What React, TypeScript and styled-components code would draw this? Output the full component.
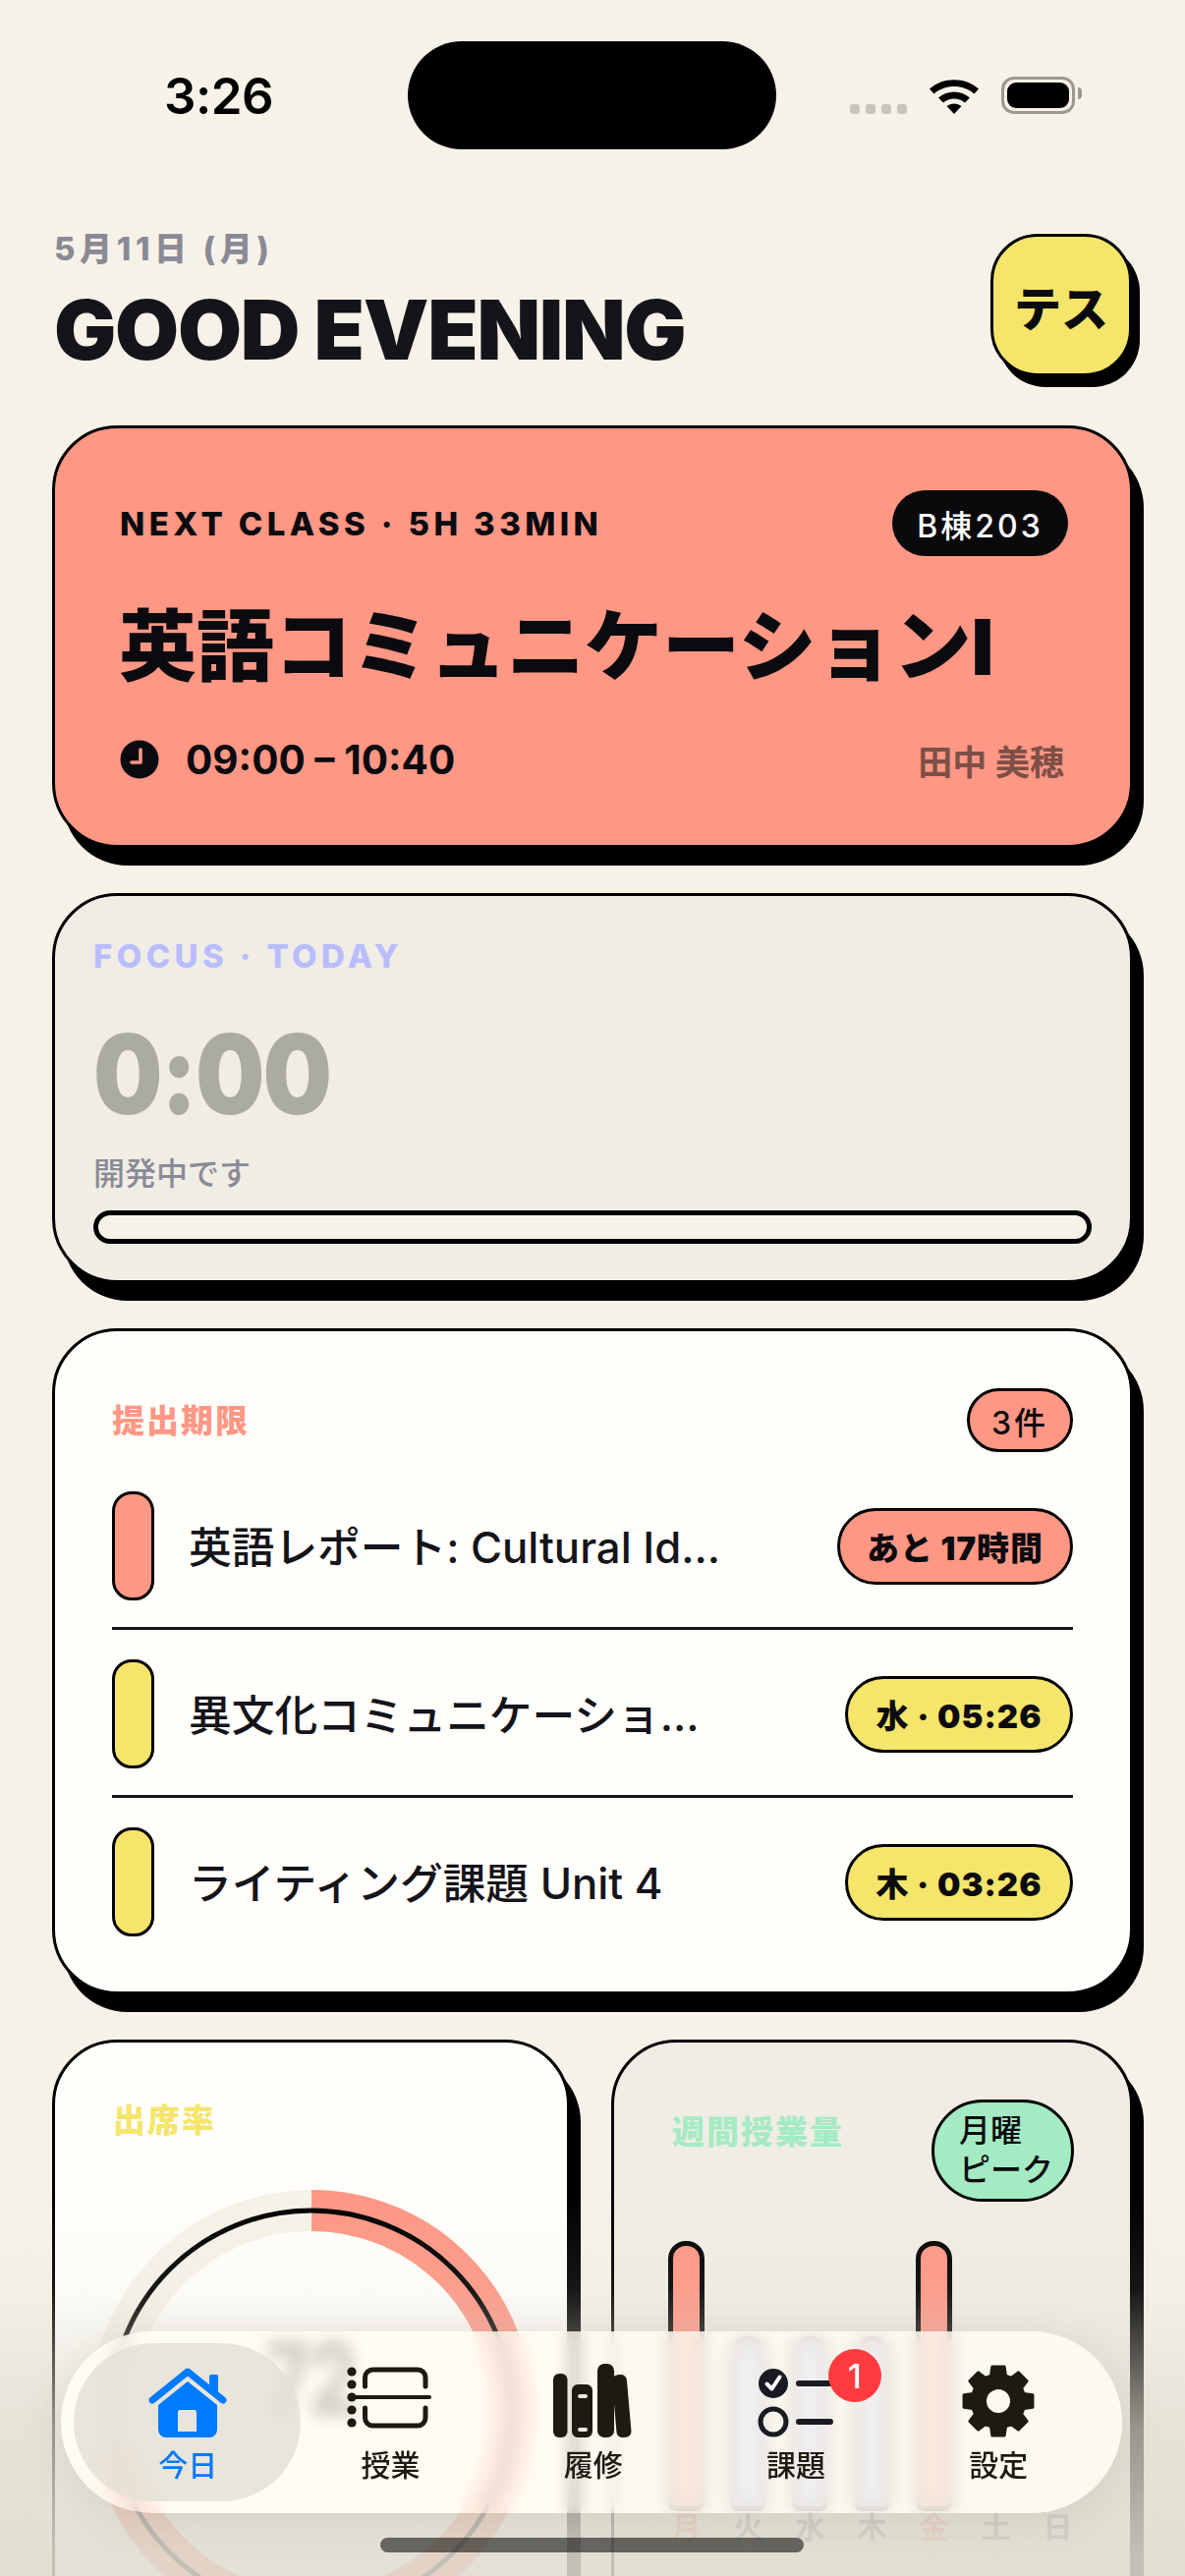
import React from "react";
import styled, { createGlobalStyle } from "styled-components";

const INK = "#0B0B0F";
const CORAL = "#FF9785";
const YELLOW = "#F5E56B";
const MINT = "#A4EBC3";
const LAVENDER = "#B9BCFF";
const CREAM = "#F6F2E8";
const PAPER = "#F0EDE4";
const WHITE = "#FFFEFA";
const MUTED = "#8A8A96";
const TAB_INK = "#1E1A10";
const FONT = `Inter, "Noto Sans CJK JP", sans-serif`;

const Global = createGlobalStyle`
  html, body { margin: 0; padding: 0; background: ${CREAM}; }
  #root { width: 1206px; height: 2622px; overflow: hidden; }
  * { box-sizing: border-box; }
`;

const Phone = styled.div`
  position: relative;
  width: 1206px;
  height: 2622px;
  overflow: hidden;
  background: ${CREAM};
  font-family: ${FONT};
  color: ${INK};
`;

const StatusBar = styled.div`
  display: flex;
  align-items: flex-start;
  height: 233px;
  padding-top: 42px;
`;
const Clock = styled.div`
  width: 415px;
  padding: 27px 0 0 167px;
  font-size: 51px;
  line-height: 58px;
  font-weight: 600;
  color: #000;
  letter-spacing: -0.5px;
`;
const Island = styled.div`
  width: 375px;
  height: 110px;
  border-radius: 55px;
  background: #000;
`;
const StatusIcons = styled.div`
  display: flex;
  align-items: flex-start;
  padding: 36px 0 0 75px;
`;
const Signal = styled.div`
  display: flex;
  gap: 6px;
  margin: 28px 22px 0 0;
`;
const SignalDot = styled.span`
  width: 10px;
  height: 10px;
  border-radius: 3px;
  background: #c8c4ba;
`;
const Battery = styled.div`
  position: relative;
  width: 75px;
  height: 38px;
  margin-left: 22px;
  padding: 3px;
  border: 3px solid #9c988e;
  border-radius: 13px;
  &::after {
    content: "";
    position: absolute;
    right: -10px;
    top: 8px;
    width: 4px;
    height: 12px;
    border-radius: 0 4px 4px 0;
    background: #9c988e;
  }
`;
const BatteryFill = styled.div`
  width: 100%;
  height: 100%;
  border-radius: 9px;
  background: #000;
`;

const Content = styled.main`
  padding: 0 53px;
  display: flex;
  flex-direction: column;
  gap: 46px;
`;

const Header = styled.header`
  display: flex;
  justify-content: space-between;
  align-items: flex-start;
  height: 154px;
  padding: 0 1px 0 2px;
`;
const DateLine = styled.div`
  font-size: 33px;
  line-height: 40px;
  font-weight: 800;
  letter-spacing: 4.6px;
  color: ${MUTED};
`;
const Greeting = styled.h1`
  margin: 13px 0 0;
  font-size: 84px;
  line-height: 100px;
  font-weight: 900;
  letter-spacing: -1.3px;
  color: #14141a;
`;
const AvatarButton = styled.div`
  display: flex;
  align-items: center;
  justify-content: center;
  width: 144px;
  height: 145px;
  margin-top: 5px;
  border: 3px solid #000;
  border-radius: 48px;
  background: ${YELLOW};
  box-shadow: 8px 11px 0 #000;
  font-size: 48px;
  font-weight: 800;
  color: ${INK};
`;

const Card = styled.section<{ $bg: string }>`
  border: 3px solid #000;
  border-radius: 66px;
  background: ${(p) => p.$bg};
  box-shadow: 11px 18px 0 #000;
`;

const Hero = styled(Card)`
  height: 430px;
  padding: 63px 63px 0 66px;
`;
const HeroTop = styled.div`
  display: flex;
  align-items: center;
  justify-content: space-between;
`;
const Eyebrow = styled.div<{ $color?: string }>`
  font-size: 33px;
  line-height: 40px;
  font-weight: 800;
  letter-spacing: 4.4px;
  color: ${(p) => p.$color ?? INK};
`;
const RoomPill = styled.div`
  display: flex;
  align-items: center;
  justify-content: center;
  width: 179px;
  height: 67px;
  border-radius: 34px;
  background: #0a0a0d;
  color: #fff;
  font-size: 32px;
  font-weight: 500;
  letter-spacing: 3px;
`;
const HeroTitle = styled.h2`
  margin: 42px 0 0 -1px;
  font-size: 79px;
  line-height: 100px;
  font-weight: 900;
  color: ${INK};
  white-space: nowrap;
`;
const HeroMeta = styled.div`
  display: flex;
  align-items: center;
  justify-content: space-between;
  height: 52px;
  margin-top: 39px;
`;
const TimeGroup = styled.div`
  display: flex;
  align-items: center;
  gap: 27px;
  font-size: 40.5px;
  font-weight: 700;
`;
const Teacher = styled.div`
  margin-right: 4px;
  font-size: 35px;
  font-weight: 600;
  color: #7d4f45;
`;

const Focus = styled(Card)`
  height: 397px;
  padding: 41px 39px 0;
`;
const FocusTime = styled.div`
  margin-top: 40px;
  font-size: 112px;
  line-height: 120px;
  font-weight: 900;
  letter-spacing: -2px;
  color: #ababa4;
  transform: scaleX(0.885);
  transform-origin: left center;
`;
const FocusNote = styled.div`
  margin-top: 20px;
  font-size: 32px;
  line-height: 44px;
  font-weight: 500;
  color: ${MUTED};
`;
const Track = styled.div`
  height: 34px;
  margin-top: 15px;
  border: 5px solid #000;
  border-radius: 17px;
  background: ${CREAM};
`;

const Deadlines = styled(Card)`
  padding: 58px 58px 56px;
`;
const SectionHead = styled.div`
  display: flex;
  align-items: center;
  justify-content: space-between;
  margin-bottom: 10px;
`;
const SectionTitle = styled.div<{ $color: string }>`
  font-size: 33px;
  line-height: 40px;
  font-weight: 900;
  letter-spacing: 2px;
  color: ${(p) => p.$color};
`;
const CountPill = styled.div`
  display: flex;
  align-items: center;
  justify-content: center;
  width: 108px;
  height: 65px;
  border: 3px solid #000;
  border-radius: 33px;
  background: ${CORAL};
  font-size: 32px;
  font-weight: 500;
  letter-spacing: 3px;
`;
const Row = styled.div`
  display: flex;
  align-items: center;
  padding: 30px 0 27px;
  border-bottom: 3px solid #14141a;
  &:last-child {
    padding-bottom: 0;
    border-bottom: none;
  }
`;
const Strip = styled.div<{ $color: string }>`
  flex: none;
  width: 43px;
  height: 111px;
  border: 3px solid #000;
  border-radius: 20px;
  background: ${(p) => p.$color};
`;
const RowTitle = styled.div`
  flex: 1;
  margin-left: 35px;
  padding-bottom: 4px;
  font-size: 43.7px;
  font-weight: 500;
  color: #14141a;
  white-space: nowrap;
`;
const DuePill = styled.div<{ $color: string; $width: number }>`
  display: flex;
  align-items: center;
  justify-content: center;
  flex: none;
  width: ${(p) => p.$width}px;
  height: 78px;
  border: 3px solid #000;
  border-radius: 39px;
  background: ${(p) => p.$color};
  font-size: 33px;
  font-weight: 900;
  letter-spacing: 1px;
`;

const Pair = styled.div`
  display: grid;
  grid-template-columns: 527px 531px;
  gap: 42px;
`;
const Tile = styled(Card)`
  height: 680px;
`;
const AttendanceTile = styled(Tile)`
  padding: 59px 0 0;
  display: flex;
  flex-direction: column;
  align-items: center;
`;
const AttendanceTitle = styled(SectionTitle)`
  align-self: flex-start;
  margin-left: 59px;
`;
const RingBox = styled.div`
  position: relative;
  width: 450px;
  height: 450px;
  margin-top: 51px;
`;
const RingValue = styled.div`
  position: absolute;
  left: 0;
  right: 0;
  top: 132px;
  text-align: center;
  font-size: 104px;
  line-height: 120px;
  font-weight: 900;
  color: ${INK};
  transform: scaleX(0.72);
`;
const WeeklyTile = styled(Tile)`
  padding: 58px 42px 0;
`;
const WeeklyHead = styled.div`
  display: flex;
  align-items: flex-start;
  justify-content: space-between;
`;
const WeeklyTitle = styled(SectionTitle)`
  margin: 13px 0 0 17px;
`;
const PeakPill = styled.div`
  width: 145px;
  height: 104px;
  margin-right: 15px;
  padding: 9px 0 0 25px;
  border: 3px solid #000;
  border-radius: 52px;
  background: ${MINT};
  font-size: 32px;
  line-height: 40px;
  font-weight: 500;
`;
const Chart = styled.div`
  display: grid;
  grid-template-columns: repeat(7, 63px);
  margin-top: 40px;
  width: 441px;
`;
const Day = styled.div`
  display: flex;
  flex-direction: column;
  align-items: center;
  justify-content: flex-end;
  height: 307px;
`;
const Bar = styled.div<{ $color: string }>`
  width: 37px;
  border: 5px solid #000;
  border-radius: 18px 18px 8px 8px;
  background: ${(p) => p.$color};
`;
const DayLabel = styled.div<{ $color: string }>`
  height: 32px;
  font-size: 30px;
  line-height: 32px;
  font-weight: 700;
  color: ${(p) => p.$color};
`;

const Fade = styled.div`
  position: absolute;
  left: 0;
  right: 0;
  top: 2230px;
  bottom: 0;
  background: linear-gradient(
    to bottom,
    rgba(223, 220, 208, 0) 0,
    rgba(223, 220, 208, 0.1) 100px,
    rgba(223, 220, 208, 0.33) 152px,
    rgba(223, 220, 208, 0.69) 240px,
    rgba(223, 220, 208, 0.87) 370px
  );
  clip-path: path(evenodd, "M0 0 H1206 V392 H0 Z M155 143 H1049 A92.5 92.5 0 0 1 1049 328 H155 A92.5 92.5 0 0 1 155 143 Z");
  pointer-events: none;
`;
const TabBar = styled.nav`
  position: absolute;
  left: 62px;
  top: 2373px;
  width: 1080px;
  height: 185px;
  padding: 0 22px 0 26px;
  display: grid;
  grid-template-columns: repeat(5, 206.3px);
  border-radius: 93px;
  background: rgba(255, 251, 242, 0.82);
  backdrop-filter: blur(8px);
  box-shadow: 0 6px 44px rgba(90, 85, 70, 0.12);
`;
const Tab = styled.div<{ $active?: boolean }>`
  position: relative;
  display: flex;
  flex-direction: column;
  align-items: center;
  padding-top: 31px;
  color: ${(p) => (p.$active ? "#007AFF" : TAB_INK)};
  &::before {
    content: "";
    display: ${(p) => (p.$active ? "block" : "none")};
    position: absolute;
    left: -13px;
    top: 12px;
    width: 231px;
    height: 161px;
    border-radius: 81px;
    background: rgba(228, 224, 214, 0.82);
  }
`;
const TabIcon = styled.svg`
  position: relative;
  display: block;
  height: 80px;
`;
const TabLabel = styled.div`
  position: relative;
  margin-top: 5px;
  font-size: 30px;
  line-height: 40px;
  font-weight: 500;
`;
const Badge = styled.div`
  position: absolute;
  left: 136px;
  top: 18px;
  width: 54px;
  height: 54px;
  border-radius: 50%;
  display: flex;
  align-items: center;
  justify-content: center;
  background: #ff3b40;
  color: #fff;
  font-size: 34px;
  font-weight: 500;
`;
const HomeIndicator = styled.div`
  position: absolute;
  left: 387px;
  top: 2583px;
  width: 431px;
  height: 15px;
  border-radius: 8px;
  background: rgba(0, 0, 0, 0.55);
`;

const gearPath = (() => {
  const c = 40;
  const pt = (deg: number, r: number) => {
    const a = (deg * Math.PI) / 180;
    return `${(c + r * Math.cos(a)).toFixed(2)} ${(c + r * Math.sin(a)).toFixed(2)}`;
  };
  const segs: string[] = [];
  for (let i = 0; i < 8; i++) {
    const a = i * 45 - 90;
    segs.push(pt(a - 16, 27), pt(a - 10, 35.5), pt(a + 10, 35.5), pt(a + 16, 27));
  }
  return `M${segs.join("L")}Z M${c + 13.5} ${c} a13.5 13.5 0 1 0 -27 0 a13.5 13.5 0 1 0 27 0Z`;
})();

const HomeGlyph = () => (
  <TabIcon viewBox="0 0 82 80" width={82}>
    <path d="M5 39 L41 10 L77 39" fill="none" stroke="currentColor" strokeWidth={7} strokeLinecap="round" strokeLinejoin="round" />
    <rect x={63} y={13} width={9} height={18} rx={1.5} fill="currentColor" />
    <path
      fillRule="evenodd"
      fill="currentColor"
      d="M41 20 L71 44 V69 a8 8 0 0 1 -8 8 H19 a8 8 0 0 1 -8 -8 V44 Z M33 49 a2 2 0 0 0 -2 2 V71 H50 V51 a2 2 0 0 0 -2 -2 Z"
    />
  </TabIcon>
);
const ClassesGlyph = () => (
  <TabIcon viewBox="0 0 90 80" width={90}>
    <path d="M19.5 25 V16 a8 8 0 0 1 8 -8 H73 a8 8 0 0 1 8 8 V25" fill="none" stroke="currentColor" strokeWidth={5} strokeLinecap="round" />
    <path d="M19.5 47 V57 a8 8 0 0 0 8 8 H73 a8 8 0 0 0 8 -8 V47" fill="none" stroke="currentColor" strokeWidth={5} strokeLinecap="round" />
    <path d="M6 36 H85" fill="none" stroke="currentColor" strokeWidth={4} strokeLinecap="round" />
    {[10, 23, 36, 49, 62].map((y) => (
      <circle key={y} cx={6} cy={y} r={4.6} fill="currentColor" />
    ))}
  </TabIcon>
);
const BooksGlyph = () => (
  <TabIcon viewBox="0 0 88 80" width={88}>
    <rect x={3} y={12} width={14.5} height={65} rx={6} fill="currentColor" />
    <path
      fillRule="evenodd"
      fill="currentColor"
      d="M28 23 H37 a6 6 0 0 1 6 6 V71 a6 6 0 0 1 -6 6 H28 a6 6 0 0 1 -6 -6 V29 a6 6 0 0 1 6 -6 Z M30 33 a2 2 0 0 0 0 4 H36 a2 2 0 0 0 0 -4 Z M30 67 a2 2 0 0 0 0 4 H36 a2 2 0 0 0 0 -4 Z"
    />
    <rect x={48} y={2} width={17} height={75} rx={7} fill="currentColor" />
    <rect x={68} y={13} width={15} height={64} rx={6} fill="currentColor" transform="rotate(-5 75 77)" />
  </TabIcon>
);
const TasksGlyph = () => (
  <TabIcon viewBox="0 0 80 80" width={80}>
    <circle cx={17} cy={22} r={15} fill="#1a1a22" />
    <path d="M10.5 22.5 L15.5 27.5 L23.5 15.5" fill="none" stroke="#fff" strokeWidth={4} strokeLinecap="round" strokeLinejoin="round" />
    <circle cx={17} cy={61} r={13} fill="none" stroke="#1a1a22" strokeWidth={5} />
    <path d="M43 22 H75 M43 61 H75" fill="none" stroke="#1a1a22" strokeWidth={6} strokeLinecap="round" />
  </TabIcon>
);
const GearGlyph = () => (
  <TabIcon viewBox="0 0 80 80" width={80}>
    <path d={gearPath} fill="currentColor" stroke="currentColor" strokeWidth={3} strokeLinejoin="round" fillRule="evenodd" />
  </TabIcon>
);

const DAYS: { d: string; h: number; c: string; l: string }[] = [
  { d: "月", h: 275, c: CORAL, l: CORAL },
  { d: "火", h: 178, c: LAVENDER, l: MUTED },
  { d: "水", h: 178, c: LAVENDER, l: MUTED },
  { d: "木", h: 178, c: LAVENDER, l: MUTED },
  { d: "金", h: 275, c: CORAL, l: CORAL },
  { d: "土", h: 0, c: "transparent", l: MUTED },
  { d: "日", h: 0, c: "transparent", l: MUTED },
];

const ringLen = 2 * Math.PI * 204;

export default function App() {
  return (
    <Phone>
      <Global />
      <StatusBar>
        <Clock>3:26</Clock>
        <Island />
        <StatusIcons>
          <Signal>
            <SignalDot />
            <SignalDot />
            <SignalDot />
            <SignalDot />
          </Signal>
          <svg width={52} height={38} viewBox="0 0 52 38">
            <path d="M1 12.5 C14 0 38 0 51 12.5 L46.5 17.5 C35.5 7.5 16.5 7.5 5.5 17.5 Z" fill="#000" />
            <path d="M10 21.5 C19 13.5 33 13.5 42 21.5 L37 26.5 C30.5 21 21.5 21 15 26.5 Z" fill="#000" />
            <path d="M18.5 30 C23 26.5 29 26.5 33.5 30 L26 38 Z" fill="#000" />
          </svg>
          <Battery>
            <BatteryFill />
          </Battery>
        </StatusIcons>
      </StatusBar>

      <Content>
        <Header>
          <div>
            <DateLine>5月11日 (月)</DateLine>
            <Greeting>GOOD EVENING</Greeting>
          </div>
          <AvatarButton>テス</AvatarButton>
        </Header>

        <Hero $bg={CORAL}>
          <HeroTop>
            <Eyebrow>NEXT CLASS · 5H 33MIN</Eyebrow>
            <RoomPill>B棟203</RoomPill>
          </HeroTop>
          <HeroTitle>英語コミュニケーションI</HeroTitle>
          <HeroMeta>
            <TimeGroup>
              <svg width={40} height={40} viewBox="0 0 40 40">
                <circle cx={20} cy={20} r={19.5} fill={INK} />
                <path d="M21 10 V23 H12" fill="none" stroke={CORAL} strokeWidth={3.6} strokeLinecap="round" strokeLinejoin="round" />
              </svg>
              09:00 – 10:40
            </TimeGroup>
            <Teacher>田中 美穂</Teacher>
          </HeroMeta>
        </Hero>

        <Focus $bg={PAPER}>
          <Eyebrow $color={LAVENDER}>FOCUS · TODAY</Eyebrow>
          <FocusTime>0:00</FocusTime>
          <FocusNote>開発中です</FocusNote>
          <Track />
        </Focus>

        <Deadlines $bg={WHITE}>
          <SectionHead>
            <SectionTitle $color={CORAL}>提出期限</SectionTitle>
            <CountPill>3件</CountPill>
          </SectionHead>
          <Row>
            <Strip $color={CORAL} />
            <RowTitle>英語レポート: Cultural Id...</RowTitle>
            <DuePill $color={CORAL} $width={240}>あと 17時間</DuePill>
          </Row>
          <Row>
            <Strip $color={YELLOW} />
            <RowTitle>異文化コミュニケーショ...</RowTitle>
            <DuePill $color={YELLOW} $width={232}>水 · 05:26</DuePill>
          </Row>
          <Row>
            <Strip $color={YELLOW} />
            <RowTitle>ライティング課題 Unit 4</RowTitle>
            <DuePill $color={YELLOW} $width={232}>木 · 03:26</DuePill>
          </Row>
        </Deadlines>

        <Pair>
          <AttendanceTile $bg={WHITE}>
            <AttendanceTitle $color={YELLOW}>出席率</AttendanceTitle>
            <RingBox>
              <svg width={450} height={450} viewBox="0 0 450 450">
                <circle cx={225} cy={225} r={204} fill="none" stroke={CREAM} strokeWidth={42} />
                <circle
                  cx={225}
                  cy={225}
                  r={204}
                  fill="none"
                  stroke={CORAL}
                  strokeWidth={42}
                  strokeDasharray={`${ringLen * 0.72} ${ringLen}`}
                  transform="rotate(-90 225 225)"
                />
                <circle cx={225} cy={225} r={204} fill="none" stroke="#000" strokeWidth={5} />
              </svg>
              <RingValue>72</RingValue>
            </RingBox>
          </AttendanceTile>

          <WeeklyTile $bg={PAPER}>
            <WeeklyHead>
              <WeeklyTitle $color={MINT}>週間授業量</WeeklyTitle>
              <PeakPill>
                月曜
                <br />
                ピーク
              </PeakPill>
            </WeeklyHead>
            <Chart>
              {DAYS.map((day) => (
                <Day key={day.d}>
                  {day.h > 0 && <Bar $color={day.c} style={{ height: day.h }} />}
                  <DayLabel $color={day.l}>{day.d}</DayLabel>
                </Day>
              ))}
            </Chart>
          </WeeklyTile>
        </Pair>
      </Content>

      <Fade />
      <TabBar>
        <Tab $active>
          <HomeGlyph />
          <TabLabel>今日</TabLabel>
        </Tab>
        <Tab>
          <ClassesGlyph />
          <TabLabel>授業</TabLabel>
        </Tab>
        <Tab>
          <BooksGlyph />
          <TabLabel>履修</TabLabel>
        </Tab>
        <Tab>
          <TasksGlyph />
          <Badge>1</Badge>
          <TabLabel>課題</TabLabel>
        </Tab>
        <Tab>
          <GearGlyph />
          <TabLabel>設定</TabLabel>
        </Tab>
      </TabBar>
      <HomeIndicator />
    </Phone>
  );
}
